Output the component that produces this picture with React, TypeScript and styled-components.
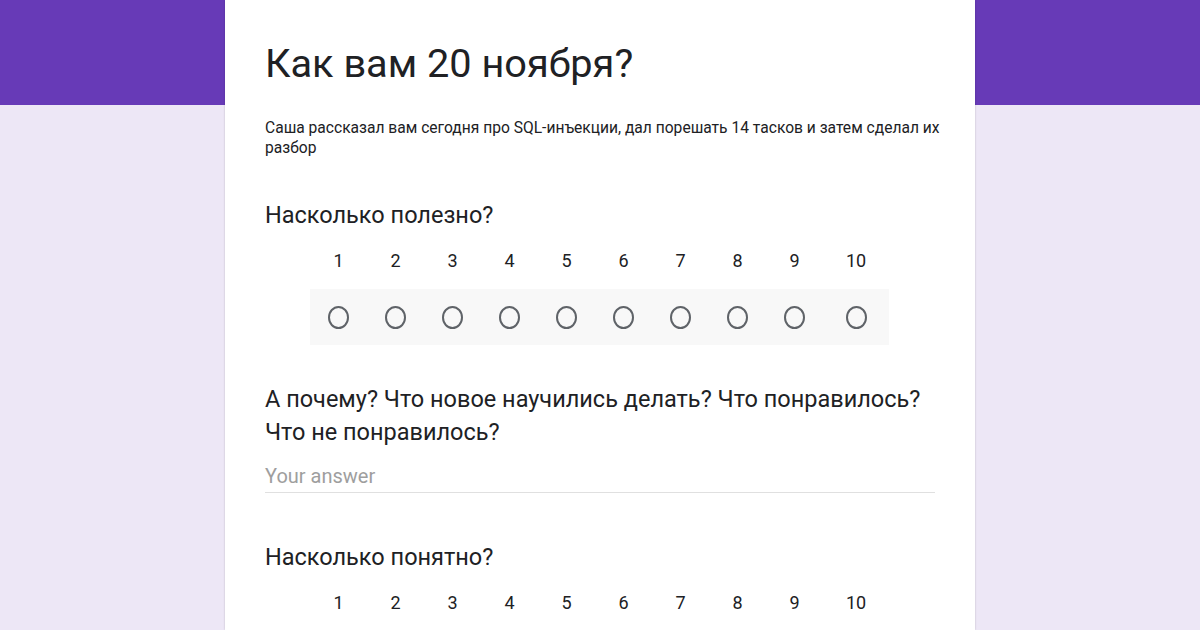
import styled, { createGlobalStyle } from "styled-components";

const GlobalStyle = createGlobalStyle`
  html, body {
    margin: 0;
    padding: 0;
  }
  body {
    width: 1200px;
    height: 630px;
    overflow: hidden;
    background-color: #ede7f6;
    font-family: Roboto, "Liberation Sans", sans-serif;
    color: #202124;
  }
`;

const Page = styled.div`
  width: 1200px;
  height: 630px;
  overflow: hidden;
  background: linear-gradient(#673ab7 0, #673ab7 105px, #ede7f6 105px);
`;

const Card = styled.div`
  width: 750px;
  height: 630px;
  margin: 0 auto;
  background-color: #fff;
  box-shadow: 0 0 2px rgba(0, 0, 0, 0.2);
  box-sizing: border-box;
  padding: 36px 40px 0 40px;
`;

const Title = styled.h1`
  margin: 0;
  font-size: 39.7px;
  font-weight: 400;
  line-height: 56px;
  color: #202124;
`;

const Description = styled.div`
  margin-top: 26px;
  width: 700px;
  font-size: 15.6px;
  line-height: 20px;
  color: #202124;
`;

const Question = styled.div<{ $top: number }>`
  margin-top: ${(p) => p.$top}px;
  width: 670px;
  font-size: 23.5px;
  line-height: 33px;
  color: #202124;
`;

const Scale = styled.div`
  display: grid;
  grid-template-columns: repeat(9, 57px) 66px;
  margin-left: 45px;
  width: 579px;
`;

const Number = styled.div`
  text-align: center;
  font-size: 18px;
  line-height: 24px;
  color: #202124;
  padding-top: 17px;
  padding-bottom: 16px;
`;

const RadioCell = styled.div`
  height: 56px;
  display: flex;
  align-items: center;
  justify-content: center;
  background-color: #f8f8f8;
`;

const Radio = styled.div`
  width: 17px;
  height: 19px;
  border: 2px solid #5f6368;
  border-radius: 50%;
`;

const Answer = styled.div`
  margin-top: 15px;
  width: 670px;
  font-size: 20px;
  line-height: 24px;
  padding-bottom: 4px;
  color: #9e9e9e;
  border-bottom: 1px solid #e0e0e0;
`;

const labels = [1, 2, 3, 4, 5, 6, 7, 8, 9, 10];

function LinearScale() {
  return (
    <Scale>
      {labels.map((n) => (
        <Number key={"n" + n}>{n}</Number>
      ))}
      {labels.map((n) => (
        <RadioCell key={"r" + n}>
          <Radio />
        </RadioCell>
      ))}
    </Scale>
  );
}

function App() {
  return (
    <Page>
      <GlobalStyle />
      <Card>
        <Title>Как вам 20 ноября?</Title>
        <Description>
          Саша рассказал вам сегодня про SQL-инъекции, дал порешать 14 тасков и
          затем сделал их разбор
        </Description>
        <Question $top={41}>Насколько полезно?</Question>
        <LinearScale />
        <Question $top={38}>
          А почему? Что новое научились делать? Что понравилось? Что не
          понравилось?
        </Question>
        <Answer>Your answer</Answer>
        <Question $top={48}>Насколько понятно?</Question>
        <LinearScale />
      </Card>
    </Page>
  );
}

export default App;
